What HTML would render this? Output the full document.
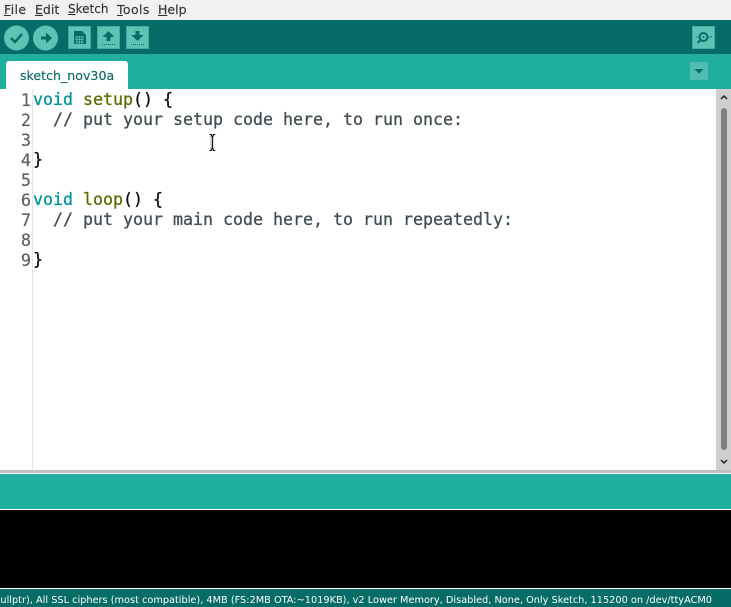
<!DOCTYPE html>
<html><head><meta charset="utf-8"><style>
html,body{margin:0;padding:0;background:#fff}
#r{position:relative;width:731px;height:607px;overflow:hidden;font-family:"DejaVu Sans",sans-serif}
#r div,#r span.a{position:absolute}
.m{position:absolute;top:1px;font-size:12.5px;line-height:17px;color:#2e3436;white-space:nowrap;-webkit-text-stroke:.15px #2e3436}
.m u{text-decoration:underline}
.n{position:absolute;right:700px;font:16.8px/20px "DejaVu Sans Mono",monospace;color:#5c6466;-webkit-text-stroke:.2px #5c6466}
.c{position:absolute;left:33px;font:16.63px/20px "DejaVu Sans Mono",monospace;color:#111;white-space:pre;-webkit-text-stroke:.3px currentColor}
.k{color:#00979c}.f{color:#5e6d03}.g{color:#434f54}
svg{position:absolute;left:0;top:0}
</style></head><body><div id="r">
<div style="left:0;top:0;width:731px;height:20px;background:#f2f1f0"></div>
<span class="m" style="left:4px;letter-spacing:.4px"><u>F</u>ile</span>
<span class="m" style="left:35px"><u>E</u>dit</span>
<span class="m" style="left:68px;font-size:12px"><u>S</u>ketch</span>
<span class="m" style="left:117px;letter-spacing:.4px"><u>T</u>ools</span>
<span class="m" style="left:158px"><u>H</u>elp</span>
<div style="left:0;top:20px;width:731px;height:34px;background:#066c68"></div>
<div style="left:0;top:54px;width:731px;height:35px;background:#20ae9f"></div>
<div style="left:6px;top:61px;width:122px;height:28px;background:#fff;border-radius:3px 3px 0 0"></div>
<div style="left:20px;top:67px;font-size:12.6px;line-height:17px;color:#0a6a66;white-space:nowrap;-webkit-text-stroke:.15px #0a6a66">sketch_nov30a</div>
<svg width="731" height="90" viewBox="0 0 731 90">
<circle cx="16.5" cy="38" r="12.5" fill="#5cc3b5"/>
<circle cx="45.5" cy="38" r="12.5" fill="#5cc3b5"/>
<path d="M11 38l4 4 7-8" fill="none" stroke="#066c68" stroke-width="2.4"/>
<path d="M41 36.500h5v-4l6 5.500-6 5.500v-4h-5z" fill="#066c68"/>
<rect x="68.500" y="26.500" width="22" height="22" fill="#5cc3b5" stroke="#3fae9f"/>
<path d="M74 31h8l4 4v9h-12z" fill="#066c68"/>
<path d="M75 37h9M75 39.500h9M75 42h9M77 36v8M79.500 36v8M82 36v8" stroke="#5cc3b5" stroke-width=".8" fill="none"/>
<rect x="97.500" y="26.500" width="22" height="22" fill="#5cc3b5" stroke="#3fae9f"/>
<path d="M108.500 31l6 6h-4v4h-4v-4h-4z" fill="#066c68"/>
<path d="M102 44.500h13" stroke="#066c68" stroke-width="1" stroke-dasharray="1 1" fill="none"/>
<rect x="126.500" y="26.500" width="22" height="22" fill="#5cc3b5" stroke="#3fae9f"/>
<path d="M135.500 31h4v4h4l-6 6-6-6h4z" fill="#066c68"/>
<path d="M131 44.500h13" stroke="#066c68" stroke-width="1" stroke-dasharray="1 1" fill="none"/>
<rect x="692.500" y="26.500" width="22" height="22" fill="#5cc3b5" stroke="#3fae9f"/>
<circle cx="703.500" cy="37" r="4" fill="none" stroke="#066c68" stroke-width="2"/>
<circle cx="703.500" cy="37" r="1" fill="#066c68"/>
<path d="M700.500 40l-3 3" stroke="#066c68" stroke-width="2.200" fill="none"/>
<path d="M696 37h3M708 37h4" stroke="#066c68" stroke-width=".7" fill="none"/>
<rect x="690" y="62" width="18" height="18" fill="#4fbdaf"/>
<path d="M694.500 69h9l-4.500 4.500z" fill="#066c68"/>
</svg>
<div style="left:32px;top:89px;width:1px;height:381px;background:#e5e5e5"></div>
<div class="n" style="top:90px">1</div><div class="n" style="top:110px">2</div><div class="n" style="top:130px">3</div><div class="n" style="top:150px">4</div><div class="n" style="top:170px">5</div><div class="n" style="top:190px">6</div><div class="n" style="top:210px">7</div><div class="n" style="top:230px">8</div><div class="n" style="top:250px">9</div>
<div class="c" style="top:90px"><span class="k">void</span> <span class="f">setup</span>() {</div>
<div class="c g" style="top:110px">  // put your setup code here, to run once:</div>
<div class="c" style="top:150px">}</div>
<div class="c" style="top:190px"><span class="k">void</span> <span class="f">loop</span>() {</div>
<div class="c g" style="top:210px">  // put your main code here, to run repeatedly:</div>
<div class="c" style="top:250px">}</div>
<svg width="731" height="607" viewBox="0 0 731 607">
<path d="M210 135.500h4M210 149.500h4M212 136v13" fill="none" stroke="#bbb" stroke-width="3"/>
<path d="M209.500 134.500h2v1.500h1v13h-1v1.500h-2M215.500 134.500h-2v1.500h-1M215.500 150.500h-2v-1.500h-1" fill="none" stroke="#222" stroke-width="1"/>
</svg>
<div style="left:716px;top:89px;width:15px;height:381px;background:#cfcfcf"></div>
<div style="left:721px;top:108px;width:6px;height:342px;background:#7f7f7f;border-radius:3px"></div>
<svg width="731" height="607" viewBox="0 0 731 607">
<path d="M721 99l3-3 3 3M721 460l3 3 3-3" fill="none" stroke="#222" stroke-width="1.500"/>
</svg>
<div style="left:0;top:470px;width:731px;height:3px;background:#c0c0c0"></div>
<div style="left:0;top:473px;width:731px;height:1px;background:#fff"></div>
<div style="left:0;top:474px;width:731px;height:35px;background:#20ae9f"></div>
<div style="left:0;top:509px;width:731px;height:1px;background:#fff"></div>
<div style="left:0;top:510px;width:731px;height:78px;background:#000"></div>
<div style="left:0;top:588px;width:731px;height:1px;background:#fff"></div>
<div style="left:0;top:589px;width:731px;height:18px;background:#066c68"></div>
<div style="right:19px;top:593px;font-size:9.75px;line-height:15px;color:#fff;white-space:nowrap">ullptr), All SSL ciphers (most compatible), 4MB (FS:2MB OTA:~1019KB), v2 Lower Memory, Disabled, None, Only Sketch, 115200 on /dev/ttyACM0</div>
</div></body></html>
